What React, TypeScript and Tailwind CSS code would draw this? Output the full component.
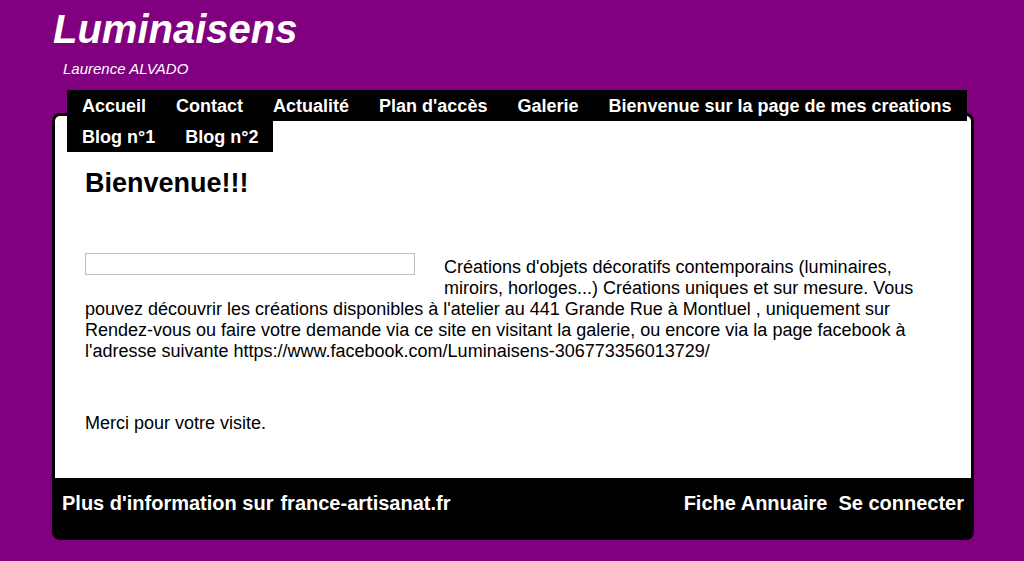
import React from "react";

export default function App() {
  const nav = [
    "Accueil",
    "Contact",
    "Actualité",
    "Plan d'accès",
    "Galerie",
    "Bienvenue sur la page de mes creations",
    "Blog n°1",
    "Blog n°2",
  ];
  return (
    <div
      className="min-h-screen w-full bg-[#800080] overflow-hidden"
      style={{ fontFamily: '"Liberation Sans", Arial, sans-serif' }}
    >
      <div className="pt-[9px] pl-[53px]">
        <h1 className="text-[40px] leading-[40px] font-bold italic text-white">Luminaisens</h1>
        <div className="mt-[11px] ml-[10px] text-[15px] leading-[18px] italic text-white">Laurence ALVADO</div>
      </div>
      <nav className="relative z-10 mt-[12px] ml-[67px] w-[903px] flex flex-wrap">
        {nav.map((n) => (
          <a
            key={n}
            className="block bg-black px-[15px] pt-[2px] text-[18px] leading-[29px] font-bold text-white whitespace-nowrap"
          >
            {n}
          </a>
        ))}
      </nav>
      <div className="relative -mt-[39px] ml-[52px] w-[922px] border-[3px] border-black rounded-[8px] bg-black overflow-hidden">
        <div className="bg-white px-[30px] pt-[52px] pb-[44px] text-black">
          <h2 className="text-[27px] leading-[31px] font-bold">Bienvenue!!!</h2>
          <p className="mt-[58px] text-[18px] leading-[21px]">
            <span className="float-left -mt-[4px] mr-[29px] mb-[10px] block w-[330px] h-[22px] border border-[#c0c0c0]"></span>
            Créations d'objets décoratifs contemporains (luminaires, miroirs, horloges...) Créations uniques et sur mesure. Vous pouvez découvrir les créations disponibles à l'atelier au 441 Grande Rue à Montluel , uniquement sur Rendez-vous ou faire votre demande via ce site en visitant la galerie, ou encore via la page facebook à l'adresse suivante https://www.facebook.com/Luminaisens-306773356013729/
          </p>
          <p className="clear-both mt-[51px] text-[18px] leading-[21px]">Merci pour votre visite.</p>
        </div>
        <div className="flex justify-between px-[7px] pt-[14px] pb-[22px] text-[20px] leading-[23px] font-bold text-white">
          <div className="flex">
            <span>Plus d'information sur</span>
            <span className="ml-[7px]">france-artisanat.fr</span>
          </div>
          <div className="flex gap-[11px]">
            <span>Fiche Annuaire</span>
            <span>Se connecter</span>
          </div>
        </div>
      </div>
    </div>
  );
}
